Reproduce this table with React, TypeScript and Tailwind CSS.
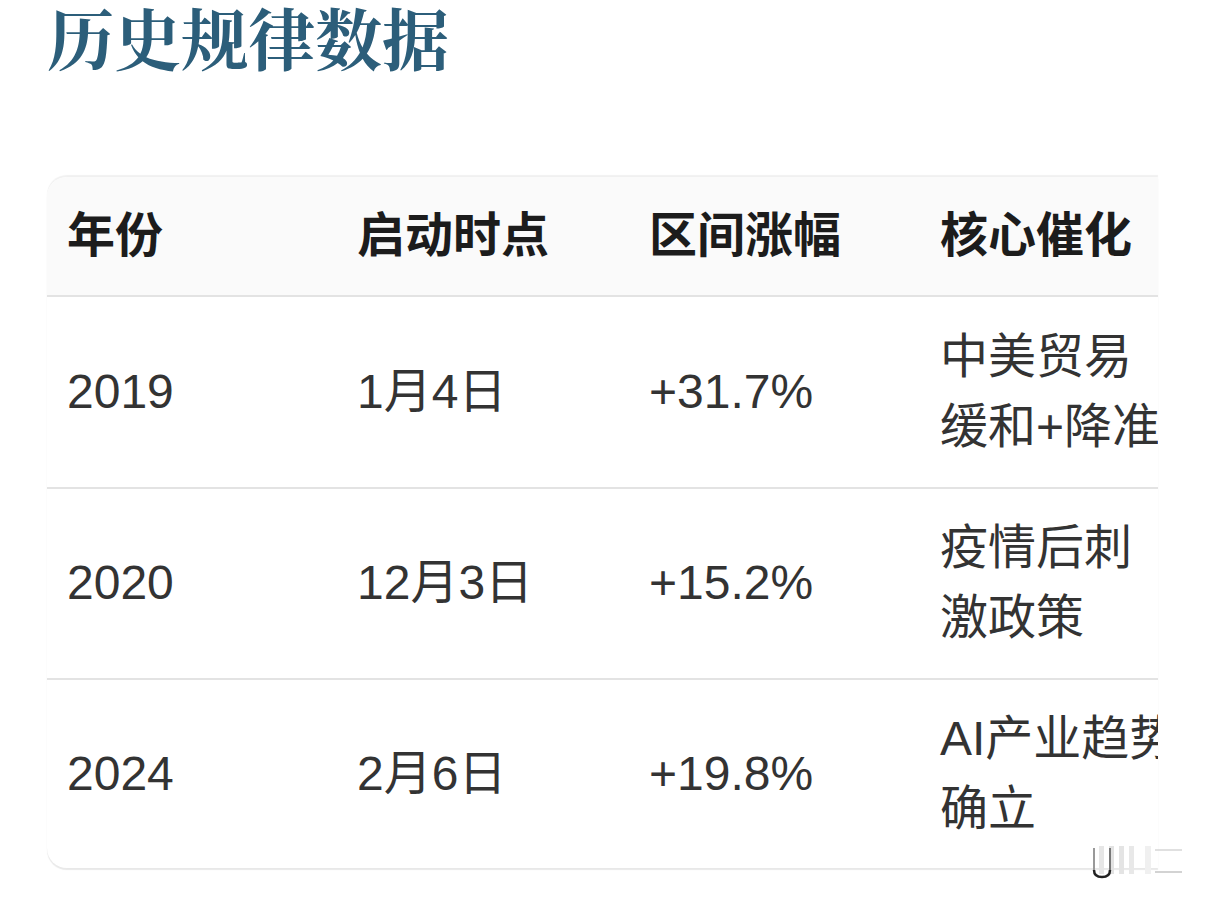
import React from "react";

const sans = { fontFamily: '"Liberation Sans", "Noto Sans CJK SC", sans-serif' };
const serif = { fontFamily: '"Noto Serif CJK SC", "Noto Serif SC", "Liberation Serif", "Noto Sans CJK SC", serif' };

const rows: { year: string; date: string; pct: string; cat: string[]; h: string }[] = [
  { year: "2019", date: "1月4日", pct: "+31.7%", cat: ["中美贸易", "缓和+降准"], h: "h-[190px]" },
  { year: "2020", date: "12月3日", pct: "+15.2%", cat: ["疫情后刺", "激政策"], h: "h-[189px]" },
  { year: "2024", date: "2月6日", pct: "+19.8%", cat: ["AI产业趋势", "确立"], h: "h-[188px]" },
];

function Watermark() {
  return (
    <svg className="absolute left-[1085px] top-[836px]" width="105" height="46" viewBox="0 0 105 46">
      <rect x="14" y="10" width="5" height="28" fill="#e6e6e6" />
      <rect x="24" y="10" width="5" height="28" fill="#e2e2e2" />
      <rect x="34" y="10" width="5" height="28" fill="#e4e4e4" />
      <rect x="44" y="10" width="5" height="28" fill="#e8e8e8" />
      <path d="M9 12 V34" stroke="#999" strokeWidth="2" />
      <path d="M25 12 V34" stroke="#777" strokeWidth="2" />
      <path d="M9 34 Q9 41 17 41 Q25 41 25 34" fill="none" stroke="#222" strokeWidth="2.5" />
      <rect x="60" y="10" width="6" height="28" fill="#f0f0f0" />
      <line x1="70" y1="14" x2="97" y2="14" stroke="#d6d6d6" strokeWidth="1.5" />
      <line x1="70" y1="36" x2="97" y2="36" stroke="#c4c4c4" strokeWidth="1.5" />
    </svg>
  );
}

export default function App() {
  return (
    <div className="relative w-[1206px] h-[901px] bg-white overflow-hidden" style={sans}>
      <h1
        className="pl-[47px] pt-0 text-[67px] leading-[1.1] font-bold text-[#2c5e7a] whitespace-nowrap"
        style={serif}
      >
        历史规律数据
      </h1>
      <div className="ml-[47px] mt-[103px] w-[1111px] rounded-l-[20px] overflow-hidden shadow-[0_-2px_1px_rgba(0,0,0,0.06),0_2px_1px_rgba(0,0,0,0.09)]">
        <div className="flex h-[118px] items-center bg-[#fafafa] border-b-2 border-[#e3e3e3] text-[48px] font-bold text-[#1c1c1c] box-content">
          <div className="w-[290px] shrink-0 pl-[20px]">年份</div>
          <div className="w-[292px] shrink-0 pl-[20px]">启动时点</div>
          <div className="w-[291px] shrink-0 pl-[20px]">区间涨幅</div>
          <div className="w-[300px] shrink-0 pl-[20px] whitespace-nowrap">核心催化</div>
        </div>
        {rows.map((r, i) => (
          <div
            key={r.year}
            className={`flex ${r.h} items-center text-[48px] text-[#333333] box-content ${
              i < rows.length - 1 ? "border-b-2 border-[#e3e3e3]" : ""
            }`}
          >
            <div className="w-[290px] shrink-0 pl-[20px]">{r.year}</div>
            <div className="w-[292px] shrink-0 pl-[20px]">{r.date}</div>
            <div className="w-[291px] shrink-0 pl-[20px]">{r.pct}</div>
            <div className="w-[300px] shrink-0 pl-[20px] whitespace-nowrap leading-[70px]">
              {r.cat[0]}
              <br />
              {r.cat[1]}
            </div>
          </div>
        ))}
      </div>
      <Watermark />
    </div>
  );
}
